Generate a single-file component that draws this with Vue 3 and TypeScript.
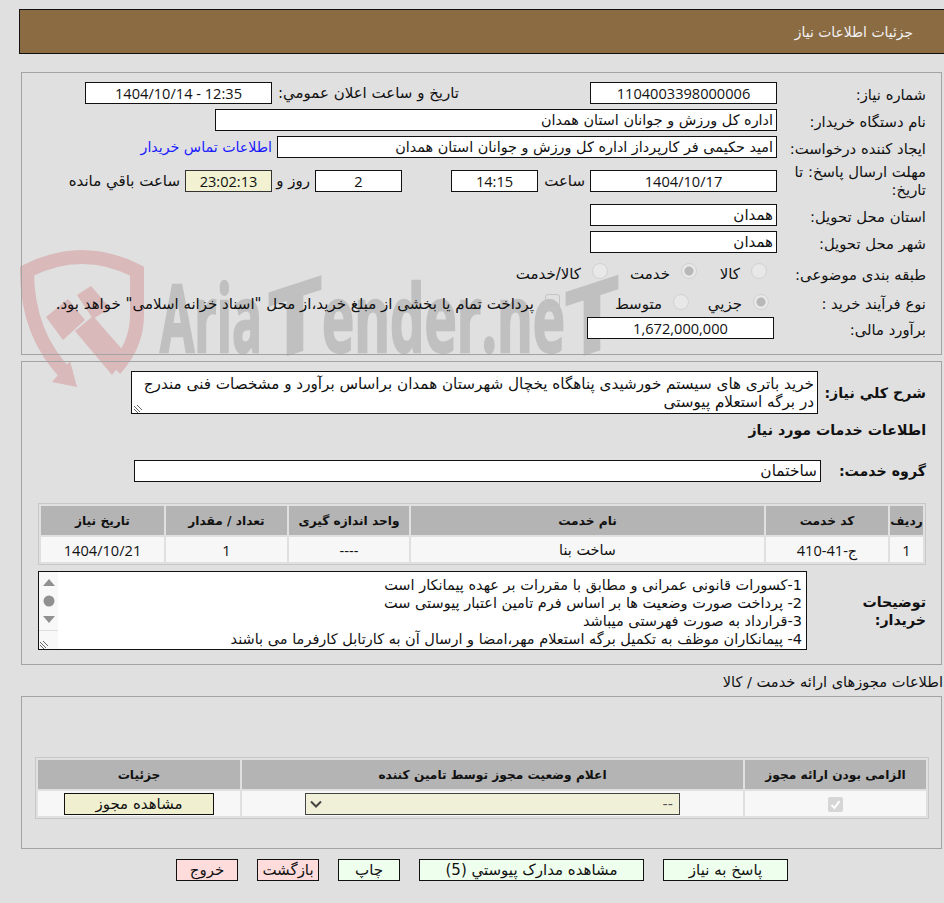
<script setup lang="ts">
interface ServiceRow {
  index: string;
  code: string;
  name: string;
  unit: string;
  amount: string;
  date: string;
}

const services: ServiceRow[] = [
  { index: '1', code: 'ج-41-410', name: 'ساخت بنا', unit: '----', amount: '1', date: '1404/10/21' },
];

const notes: string[] = [
  '1-کسورات قانونی عمرانی و مطابق با مقررات بر عهده پیمانکار است',
  '2- پرداخت صورت وضعیت ها بر اساس فرم تامین اعتبار پیوستی ست',
  '3-قرارداد به صورت فهرستی میباشد',
  '4- پیمانکاران موظف به تکمیل برگه استعلام مهر،امضا و ارسال آن به کارتابل کارفرما می باشند',
];
</script>

<template>
  <div class="page" dir="rtl">
    <svg class="watermark" width="944" height="400" viewBox="0 0 944 400" aria-hidden="true">
      <path class="shield" d="M68 376 Q27 335 27 271 Q82 243 137 271 L137 315 Q137 345 115 369" />
      <polygon class="shield-fill" points="52,382 70,361 77,387" />
      <polygon class="shield-fill" points="46,317 68,299 85,320 63,340" />
      <polygon class="shield-fill" points="77,295 91,286 110,308 93,319" />
      <polygon class="shield-fill" points="75,331 93,316 127,355 112,375" />
      <g class="wm-text">
        <text x="160" y="352" textLength="102" lengthAdjust="spacingAndGlyphs">Aria</text>
        <text x="268" y="352" textLength="54" lengthAdjust="spacingAndGlyphs" transform="translate(0 96) skewY(-18)">T</text>
        <text x="322" y="352" textLength="243" lengthAdjust="spacingAndGlyphs">ender.ne</text>
        <text x="565" y="352" textLength="54" lengthAdjust="spacingAndGlyphs" transform="translate(0 192) skewY(-18)">T</text>
      </g>
    </svg>

    <header class="top-bar">جزئیات اطلاعات نیاز</header>

    <section class="panel panel-main">
      <div class="row">
        <label class="row-label">شماره نیاز:</label>
        <div class="row-body">
          <div class="field w187 center num">1104003398000006</div>
          <span class="announce-label">تاریخ و ساعت اعلان عمومي:</span>
          <div class="field w187 center num">12:35 - 1404/10/14</div>
        </div>
      </div>
      <div class="row">
        <label class="row-label">نام دستگاه خریدار:</label>
        <div class="row-body">
          <div class="field w562">اداره کل ورزش و جوانان استان همدان</div>
        </div>
      </div>
      <div class="row">
        <label class="row-label">ایجاد کننده درخواست:</label>
        <div class="row-body">
          <div class="field w500">امید حکیمی فر کارپرداز اداره کل ورزش و جوانان استان همدان</div>
          <a class="contact-link">اطلاعات تماس خریدار</a>
        </div>
      </div>
      <div class="row row-deadline">
        <label class="row-label two-line">مهلت ارسال پاسخ: تا تاریخ:</label>
        <div class="row-body">
          <div class="field w187 center num">1404/10/17</div>
          <span class="hour-label">ساعت</span>
          <div class="field w87 center num">14:15</div>
          <div class="field w87 center num days">2</div>
          <span class="days-label">روز و</span>
          <div class="field w87 center num counter">23:02:13</div>
          <span class="remain-label">ساعت باقي مانده</span>
        </div>
      </div>
      <div class="row">
        <label class="row-label">استان محل تحویل:</label>
        <div class="row-body">
          <div class="field w187 city">همدان</div>
        </div>
      </div>
      <div class="row">
        <label class="row-label">شهر محل تحویل:</label>
        <div class="row-body">
          <div class="field w187 city">همدان</div>
        </div>
      </div>
      <div class="row row-topic">
        <label class="row-label">طبقه بندی موضوعی:</label>
        <div class="row-body choices">
          <span class="choice c-kala"><input type="radio" disabled name="topic" /><span>کالا</span></span>
          <span class="choice c-service"><input type="radio" disabled checked name="topic" /><span>خدمت</span></span>
          <span class="choice"><input type="radio" disabled name="topic" /><span>کالا/خدمت</span></span>
        </div>
      </div>
      <div class="row row-process">
        <label class="row-label">نوع فرآیند خرید :</label>
        <div class="row-body choices">
          <span class="choice c-partial"><input type="radio" disabled checked name="process" /><span>جزيي</span></span>
          <span class="choice c-medium"><input type="radio" disabled name="process" /><span>متوسط</span></span>
          <span class="choice"><input type="checkbox" disabled class="square" /><span>پرداخت تمام یا بخشی از مبلغ خرید،از محل "اسناد خزانه اسلامی" خواهد بود.</span></span>
        </div>
      </div>
      <div class="row row-budget">
        <label class="row-label">برآورد مالی:</label>
        <div class="row-body">
          <div class="field w187 center num budget">1,672,000,000</div>
        </div>
      </div>
    </section>

    <section class="panel panel-need">
      <div class="need-row">
        <label class="bold-label desc-label">شرح کلي نیاز:</label>
        <div class="desc-box">
          خرید باتری های سیستم خورشیدی پناهگاه یخچال شهرستان همدان براساس برآورد و مشخصات فنی مندرج در برگه استعلام پیوستی
          <svg class="grip" width="10" height="10" viewBox="0 0 10 10"><path d="M1 3l6 6M1 6l4 4M4 2l5 5" stroke="#666" fill="none" /></svg>
        </div>
      </div>
      <h3 class="bold-label services-title">اطلاعات خدمات مورد نیاز</h3>
      <div class="need-row group-row">
        <label class="bold-label group-label">گروه خدمت:</label>
        <div class="field w687 group-field">ساختمان</div>
      </div>

      <table class="grid-table service-table">
        <colgroup>
          <col class="col-33" /><col class="col-122" /><col class="col-353" />
          <col class="col-120" /><col class="col-121" /><col />
        </colgroup>
        <thead>
          <tr>
            <th>رديف</th>
            <th>کد خدمت</th>
            <th>نام خدمت</th>
            <th>واحد اندازه گیری</th>
            <th>تعداد / مقدار</th>
            <th>تاریخ نیاز</th>
          </tr>
        </thead>
        <tbody>
          <tr v-for="row in services" :key="row.index">
            <td class="num">{{ row.index }}</td>
            <td class="num">{{ row.code }}</td>
            <td>{{ row.name }}</td>
            <td class="num">{{ row.unit }}</td>
            <td class="num">{{ row.amount }}</td>
            <td class="num">{{ row.date }}</td>
          </tr>
        </tbody>
      </table>

      <div class="need-row notes-row">
        <label class="bold-label notes-label">توضیحات خریدار:</label>
        <div class="notes-box">
          <div class="notes-lines">
            <div v-for="line in notes" :key="line" class="note-line">{{ line }}</div>
          </div>
          <div class="fake-scroll">
            <svg width="18" height="56" viewBox="0 0 18 56">
              <path d="M3 14l6-7 6 7z" fill="#909090" />
              <circle cx="9" cy="29" r="5.5" fill="#909090" />
              <path d="M3 44l6 7 6-7z" fill="#909090" />
            </svg>
            <div class="scroll-corner">
              <svg width="10" height="10" viewBox="0 0 10 10"><path d="M1 3l6 6M1 6l4 4M4 2l5 5" stroke="#666" fill="none" /></svg>
            </div>
          </div>
        </div>
      </div>
    </section>

    <div class="license-title">اطلاعات مجوزهای ارائه خدمت / کالا</div>

    <section class="panel panel-license">
      <table class="grid-table license-table">
        <colgroup>
          <col class="col-181" /><col class="col-501" /><col />
        </colgroup>
        <thead>
          <tr>
            <th>الزامی بودن ارائه مجوز</th>
            <th>اعلام وضعیت مجوز توسط تامین کننده</th>
            <th>جزئیات</th>
          </tr>
        </thead>
        <tbody>
          <tr>
            <td><span class="check-box">
              <svg width="11" height="11" viewBox="0 0 11 11"><path d="M1.5 6l3 3 5-7" fill="none" stroke="#fff" stroke-width="2" /></svg>
            </span></td>
            <td>
              <div class="status-select">
                <span>--</span>
                <svg width="12" height="8" viewBox="0 0 12 8"><path d="M1 1.5l5 5 5-5" fill="none" stroke="#444" stroke-width="2" /></svg>
              </div>
            </td>
            <td><button class="view-btn">مشاهده مجوز</button></td>
          </tr>
        </tbody>
      </table>
    </section>

    <div class="actions">
      <button class="act green w125">پاسخ به نیاز</button>
      <button class="act green w225">مشاهده مدارک پیوستي (5)</button>
      <button class="act green w62">چاپ</button>
      <button class="act pink w62">بازگشت</button>
      <button class="act pink w62">خروج</button>
    </div>
  </div>
</template>

<style scoped>
.page {
  position: relative;
  width: 944px;
  height: 903px;
  overflow: hidden;
  background: #e0e0e0;
  color: #111;
  font-family: "DejaVu Sans", sans-serif;
  font-size: 14.4px;
}

.watermark {
  position: absolute;
  top: 0;
  left: 0;
}

.shield {
  fill: none;
  stroke: #d9b9ba;
  stroke-width: 14;
}

.shield-fill {
  fill: #d9b9ba;
}

.wm-text text {
  direction: ltr;
  fill: #c0c0c0;
  stroke: #c0c0c0;
  stroke-width: 2.5;
  font-family: "Open Sans", sans-serif;
  font-weight: 700;
  font-size: 94px;
}

.top-bar {
  position: relative;
  box-sizing: border-box;
  height: 45px;
  margin: 9px -10px 0 19px;
  padding: 0 40px 0 0;
  line-height: 44px;
  background: #8b6b42;
  border: 1px solid #111;
  color: #f2f2f2;
  font-size: 13.9px;
}

.panel {
  position: relative;
  box-sizing: border-box;
  width: 921px;
  margin-right: 2px;
  border: 1px solid #a3a3a3;
}

.panel-main {
  height: 283px;
  margin-top: 18px;
  padding-top: 9px;
}

.row {
  display: grid;
  grid-template-columns: 164px 1fr;
  grid-template-rows: 22px;
  align-items: center;
  height: 22px;
  margin-bottom: 5px;
}

.row-label {
  padding: 2px 15px 0 0;
  font-size: 14.8px;
  white-space: nowrap;
}

.two-line {
  padding-top: 0;
  white-space: normal;
  line-height: 18px;
}

.row-body {
  display: flex;
  align-items: center;
  height: 100%;
}

.field {
  box-sizing: border-box;
  height: 22px;
  padding: 0 3px;
  line-height: 20px;
  background: #fff;
  border: 1px solid #111;
  white-space: nowrap;
  overflow: hidden;
}

.center {
  text-align: center;
}

.num {
  font-family: "Open Sans", "DejaVu Sans", sans-serif;
  font-size: 14.6px;
}

.city {
  font-size: 15px;
}

.group-field {
  font-size: 15.4px;
}

.w187 {
  width: 187px;
}

.w87 {
  width: 87px;
}

.w500 {
  width: 500px;
}

.w562 {
  width: 562px;
}

.w687 {
  width: 687px;
}

.announce-label {
  width: 318px;
  padding-right: 131px;
  box-sizing: border-box;
  font-size: 15px;
  white-space: nowrap;
}

.contact-link {
  margin-right: 5px;
  color: #1a1aff;
  font-size: 14.2px;
  white-space: nowrap;
}

.row-deadline {
  margin-top: 12px;
  margin-bottom: 12px;
}

.hour-label {
  width: 52px;
  padding-right: 5px;
  box-sizing: border-box;
  font-size: 15px;
}

.days {
  margin-right: 49px;
}

.days-label {
  width: 43px;
  padding-right: 5px;
  box-sizing: border-box;
  font-size: 15px;
  white-space: nowrap;
}

.counter {
  background: #f2f2d2;
  border-color: #333;
}

.remain-label {
  padding-right: 5px;
  font-size: 15px;
  white-space: nowrap;
}

.row-topic {
  margin-top: 10px;
  margin-bottom: 7px;
}

.row-topic .row-label,
.row-process .row-label {
  padding-top: 0;
}

.row-process {
  margin-bottom: 3px;
}

.row-process .choices {
  padding-right: 8px;
}

.row-process .choice span {
  padding-top: 2px;
}

.row-budget {
  grid-template-columns: 167px 1fr;
}

.choices {
  padding-right: 10px;
  font-size: 15px;
}

.choice {
  display: inline-flex;
  align-items: center;
  gap: 11px;
  white-space: nowrap;
}

.c-kala {
  width: 70px;
}

.c-service {
  width: 89px;
}

.c-partial {
  width: 80px;
}

.c-medium {
  width: 129px;
}

.choice input {
  flex: none;
  appearance: none;
  box-sizing: border-box;
  width: 16px;
  height: 16px;
  margin: -6px 0 0;
  background: #e8e8e8;
  border: 1px solid #d2d2d2;
  border-radius: 50%;
}

.row-process .choice input {
  margin-top: -3px;
}

.choice input:checked {
  background: radial-gradient(circle, #b8b8b8 0 4px, #e8e8e8 5px);
}

.row-process .choice input.square {
  width: 15px;
  height: 15px;
  margin-top: -4px;
  border-radius: 3px;
  background: transparent;
  border-color: #c4c4c4;
}

.panel-need {
  height: 304px;
  margin-top: 6px;
  padding: 9px 15px 0 0;
}

.need-row {
  display: flex;
  align-items: center;
}

.bold-label {
  margin: 0;
  font-size: 14.2px;
  font-weight: 700;
  white-space: nowrap;
}

.desc-label {
  width: 108px;
}

.desc-box {
  position: relative;
  box-sizing: border-box;
  width: 687px;
  height: 43px;
  padding: 3px 3px 0 8px;
  font-size: 15.2px;
  line-height: 18px;
  background: #fff;
  border: 1px solid #111;
}

.grip {
  position: absolute;
  bottom: 0;
  left: 1px;
}

.services-title {
  height: 20px;
  margin-top: 6px;
  line-height: 20px;
}

.group-row {
  margin-top: 20px;
}

.group-label {
  width: 105px;
}

.grid-table {
  border-collapse: separate;
  border-spacing: 2px;
  table-layout: fixed;
  background: #e0e0e0;
  border: 1px solid #c8c8c8;
}

.col-33 {
  width: 33px;
}

.col-120 {
  width: 120px;
}

.col-121 {
  width: 121px;
}

.col-122 {
  width: 122px;
}

.col-181 {
  width: 181px;
}

.col-353 {
  width: 353px;
}

.col-501 {
  width: 501px;
}

.grid-table th {
  height: 29px;
  padding: 0;
  background: #b4b4b4;
  font-size: 12.2px;
  font-weight: 700;
  text-align: center;
}

.grid-table td {
  height: 25px;
  padding: 0;
  background: #f7f7f7;
  text-align: center;
}

.service-table {
  width: 888px;
  margin-top: 21px;
}

.notes-row {
  margin-top: 6px;
}

.notes-label {
  box-sizing: border-box;
  width: 119px;
  padding-left: 45px;
  white-space: normal;
  line-height: 18px;
}

.notes-box {
  display: flex;
  box-sizing: border-box;
  width: 769px;
  height: 79px;
  background: #fff;
  border: 1px solid #111;
}

.notes-lines {
  flex: 1;
  min-width: 0;
  padding: 4px 4px 0 0;
  font-size: 14.5px;
  line-height: 18px;
}

.note-line {
  white-space: nowrap;
}

.fake-scroll {
  display: flex;
  flex-direction: column;
  justify-content: space-between;
  width: 19px;
  background: #f8f8f8;
}

.scroll-corner {
  height: 19px;
  border-top: 1px solid #ddd;
  direction: ltr;
  line-height: 0;
  padding-top: 8px;
  box-sizing: border-box;
}

.license-title {
  position: relative;
  height: 31px;
  padding-right: 1px;
  font-size: 14.6px;
  line-height: 34px;
}

.panel-license {
  height: 153px;
  padding: 60px 12px 0 0;
}

.license-table {
  width: 894px;
}

.check-box {
  display: inline-flex;
  align-items: center;
  justify-content: center;
  width: 15px;
  height: 15px;
  margin-top: 3px;
  background: #d6d6d6;
  border-radius: 2px;
}

.status-select {
  display: flex;
  align-items: center;
  justify-content: space-between;
  box-sizing: border-box;
  width: 375px;
  height: 22px;
  margin-right: 63px;
  padding: 0 6px 0 4px;
  background: #f0f0d8;
  border: 1px solid #444;
  color: #555;
}

.view-btn {
  display: block;
  box-sizing: border-box;
  width: 150px;
  height: 22px;
  margin: 0 auto;
  padding: 0;
  background: #f0f0d0;
  border: 1px solid #111;
  color: #111;
  font-family: inherit;
  font-size: 15px;
}

.actions {
  position: relative;
  display: flex;
  gap: 19px;
  margin-top: 10px;
  padding-right: 156px;
}

.act {
  box-sizing: border-box;
  height: 22px;
  padding: 0;
  border: 1px solid #111;
  color: #111;
  font-family: inherit;
  font-size: 15px;
  white-space: nowrap;
}

.green {
  background: #eeffee;
}

.pink {
  background: #ffdcdc;
}

.w125 {
  width: 125px;
}

.w225 {
  width: 225px;
}

.w62 {
  width: 62px;
}
</style>

<style>
html,
body {
  margin: 0;
  overflow: hidden;
  background: #e0e0e0;
}
</style>
